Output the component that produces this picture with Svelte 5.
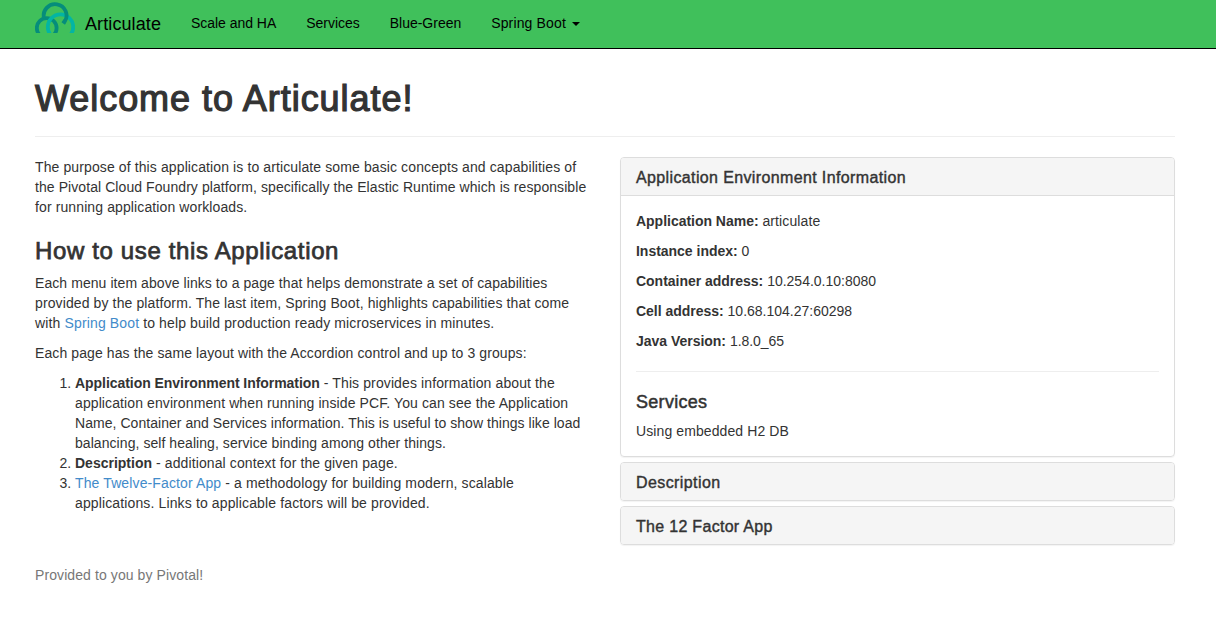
<script>
  const info = [
    { label: 'Application Name:', value: 'articulate', track: 0.1 },
    { label: 'Instance index:', value: '0', track: 0 },
    { label: 'Container address:', value: '10.254.0.10:8080', track: 0 },
    { label: 'Cell address:', value: '10.68.104.27:60298', track: 0 },
    { label: 'Java Version:', value: '1.8.0_65', track: -0.05 }
  ];
</script>

{#snippet t(text, track)}<span style="letter-spacing: {track}px">{text}</span>{/snippet}

<nav class="navbar">
  <a class="brand" href="#home">
    <svg class="logo" width="40" height="31" viewBox="0 0 40 31" fill="none" stroke-width="3.8">
      <circle cx="11.700" cy="26" r="9.900" stroke="#058d7b" />
      <circle cx="25.500" cy="25" r="12.700" stroke="#03b5a4" />
      <path d="M9.100 16.500A11.400 11.400 0 1 1 29.500 20L27.600 18.600" stroke="#058d7b" />
    </svg>
    <span>Articulate</span>
  </a>
  <a href="#scale">{@render t('Scale and HA', -0.03)}</a>
  <a href="#services">{@render t('Services', -0.02)}</a>
  <a href="#bluegreen">{@render t('Blue-Green', -0.02)}</a>
  <a href="#boot">{@render t('Spring Boot', 0.15)}<i class="caret"></i></a>
</nav>

<div class="container">
  <header class="page-header"><h1>Welcome to Articulate!</h1></header>

  <div class="row">
    <main>
      <p>
        {@render t('The purpose of this application is to articulate some basic concepts and capabilities of', 0.11)}<br />
        {@render t('the Pivotal Cloud Foundry platform, specifically the Elastic Runtime which is responsible', 0.074)}<br />
        {@render t('for running application workloads.', 0.11)}
      </p>
      <h3>How to use this Application</h3>
      <p>
        {@render t('Each menu item above links to a page that helps demonstrate a set of capabilities', 0.07)}<br />
        {@render t('provided by the platform. The last item, Spring Boot, highlights capabilities that come', 0.113)}<br />
        {@render t('with ', 0.14)}<a href="#spring">{@render t('Spring Boot', 0.14)}</a>{@render t(' to help build production ready microservices in minutes.', 0.115)}
      </p>
      <p>{@render t('Each page has the same layout with the Accordion control and up to 3 groups:', 0.1)}</p>
      <ol>
        <li>
          <b>{@render t('Application Environment Information', -0.05)}</b>{@render t(' - This provides information about the', 0.11)}<br />
          {@render t('application environment when running inside PCF. You can see the Application', 0.1)}<br />
          {@render t('Name, Container and Services information. This is useful to show things like load', 0.045)}<br />
          {@render t('balancing, self healing, service binding among other things.', 0.06)}
        </li>
        <li><b>Description</b>{@render t(' - additional context for the given page.', 0.11)}</li>
        <li>
          <a href="#twelve">{@render t('The Twelve-Factor App', 0.12)}</a>{@render t(' - a methodology for building modern, scalable', 0.12)}<br />
          {@render t('applications. Links to applicable factors will be provided.', 0.13)}
        </li>
      </ol>
    </main>

    <aside>
      <section class="panel">
        <h4>{@render t('Application Environment Information', 0.37)}</h4>
        <div class="body">
          {#each info as row}
            <p><b>{@render t(row.label, -0.02)}</b> {@render t(row.value, row.track)}</p>
          {/each}
          <hr />
          <h5>Services</h5>
          <p>{@render t('Using embedded H2 DB', 0.1)}</p>
        </div>
      </section>
      <section class="panel"><h4>{@render t('Description', 0.41)}</h4></section>
      <section class="panel"><h4>{@render t('The 12 Factor App', 0.3)}</h4></section>
    </aside>
  </div>

  <footer>Provided to you by Pivotal!</footer>
</div>

<style>
  :global(body) {
    background: #fff;
    color: #333;
    font: 14px/20px 'Liberation Sans', Arial, sans-serif;
  }
  a { color: #428bca; text-decoration: none; }
  .navbar {
    display: flex;
    gap: 30px;
    height: 48px;
    padding-left: 35px;
    background: #40c05b;
    border-bottom: 1px solid #000;
  }
  .navbar a { color: #000; line-height: 20px; padding-top: 13px; white-space: nowrap; }
  .navbar .brand { display: flex; gap: 10px; width: 126px; padding: 0; font-size: 18px; letter-spacing: 0.1px; }
  .brand span { padding-top: 14px; }
  .logo { margin-top: 2px; flex: none; }
  .caret {
    display: inline-block;
    margin-left: 6px;
    vertical-align: middle;
    border-top: 4px solid #000;
    border-left: 4px solid transparent;
    border-right: 4px solid transparent;
  }
  .container { width: 1140px; margin-left: 35px; white-space: nowrap; }
  h1, h3, h4, h5 { margin: 0; font-weight: 400; line-height: 1.1; }
  .page-header { height: 57px; padding-top: 30px; border-bottom: 1px solid #eee; }
  h1 { font-size: 36px; letter-spacing: 0.95px; -webkit-text-stroke: 1.2px #333; }
  .row { display: grid; grid-template-columns: 555px 555px; gap: 30px; margin-top: 20px; }
  p { margin: 0 0 10px; }
  h3 { margin: 21px 0 9px; font-size: 24px; letter-spacing: 0.64px; -webkit-text-stroke: 0.75px #333; }
  ol { margin: 0; padding-left: 40px; }
  .panel {
    margin-bottom: 5px;
    border: 1px solid #ddd;
    border-radius: 4px;
    box-shadow: 0 1px 1px rgba(0, 0, 0, 0.05);
    overflow: hidden;
  }
  h4 { padding: 11px 15px 9px; background: #f5f5f5; font-size: 16px; line-height: 17px; -webkit-text-stroke: 0.4px #333; }
  .body { padding: 15px; border-top: 1px solid #ddd; }
  .body > :last-child { margin-bottom: 0; }
  hr { margin: 20px 0; border: 0; border-top: 1px solid #eee; }
  h5 { margin: 20px 0 9px; font-size: 18px; line-height: 20px; letter-spacing: 0.29px; -webkit-text-stroke: 0.5px #333; }
  footer { margin-top: 15px; color: #777; letter-spacing: 0.09px; }
</style>
